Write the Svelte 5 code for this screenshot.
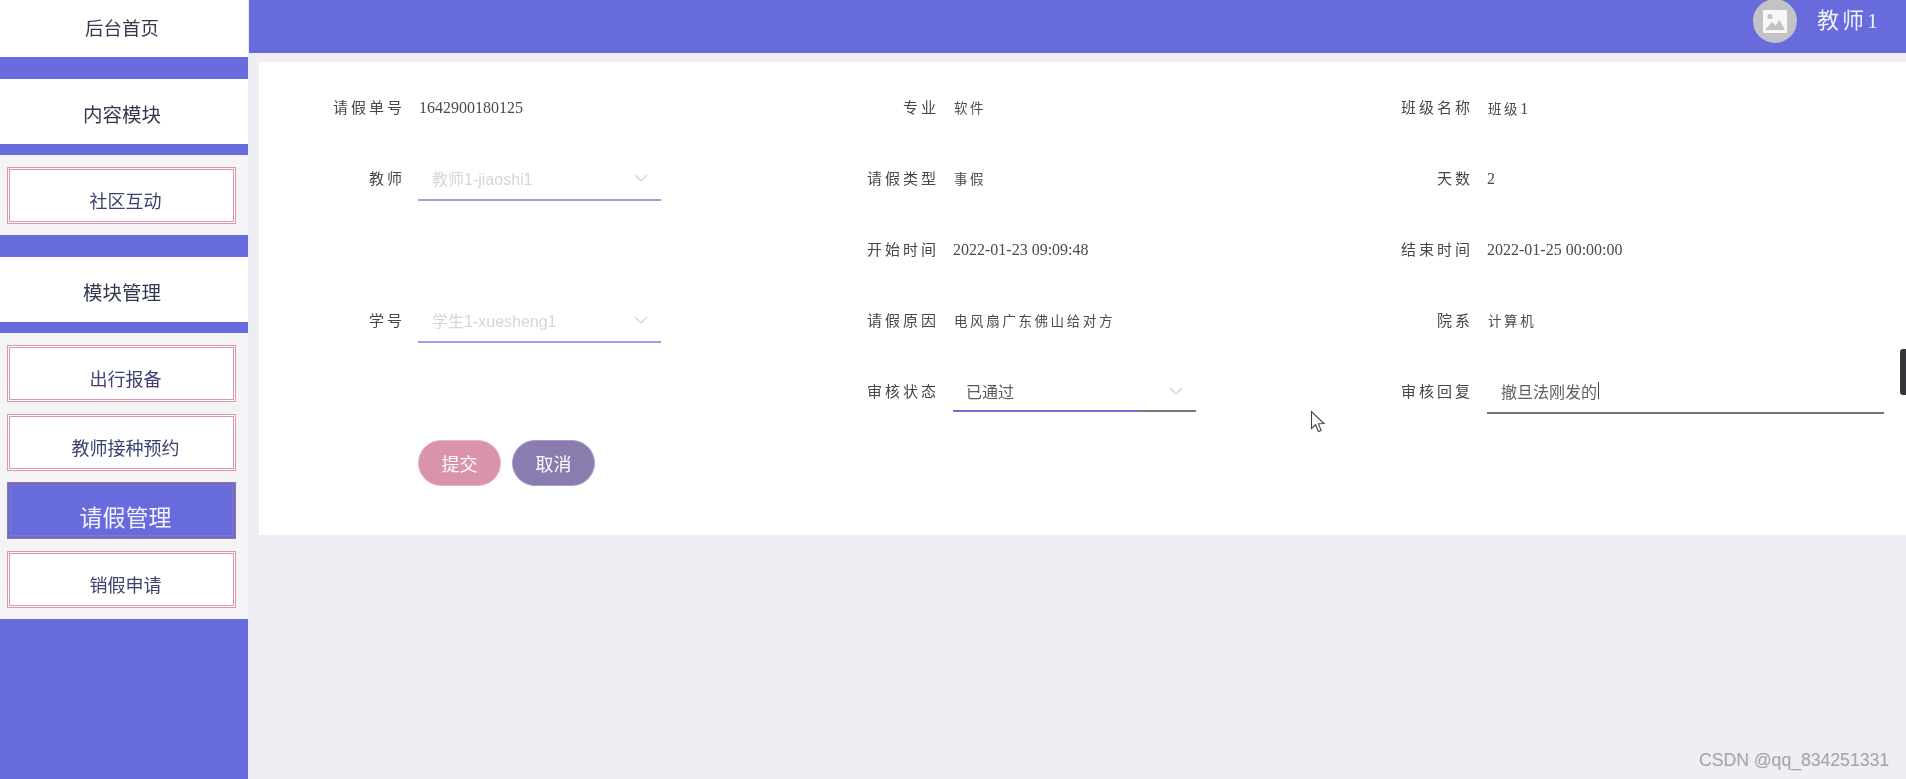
<script>
  const panelA = [{ t: '社区互动' }];
  const panelB = [
    { t: '出行报备' },
    { t: '教师接种预约' },
    { t: '请假管理', active: true },
    { t: '销假申请' }
  ];
</script>

<div class="page">
  <aside class="side">
    <div class="head first">后台首页</div>
    <div class="head second">内容模块</div>
    <div class="panel one">
      {#each panelA as it}
        <div class="item">{it.t}</div>
      {/each}
    </div>
    <div class="head third">模块管理</div>
    <div class="panel two">
      {#each panelB as it}
        <div class="item" class:active={it.active}>{it.t}</div>
      {/each}
    </div>
  </aside>

  <main class="main">
    <header class="top">
      <div class="avatar">
        <svg width="24" height="23" viewBox="0 0 24 23">
          <rect width="24" height="23" rx="1" fill="#f7f7f8" />
          <circle cx="7" cy="6.5" r="2.6" fill="#c3c3c6" />
          <path d="M2 20 L9 12 L12.5 15.5 L16.5 10 L22 20 Z" fill="#c3c3c6" />
        </svg>
      </div>
      <div class="user">教师<span class="num">1</span></div>
    </header>

    <section class="card">
      <div class="grid">
        <div class="cell"><span class="lab">请假单号</span><span class="val">1642900180125</span></div>
        <div class="cell"><span class="lab">专业</span><span class="val cjk">软件</span></div>
        <div class="cell"><span class="lab">班级名称</span><span class="val"><span class="cjk">班级</span>1</span></div>

        <div class="cell">
          <span class="lab">教师</span>
          <div class="select light"><span class="ph">教师1-jiaoshi1</span>
            <svg class="chev" width="14" height="8" viewBox="0 0 14 8"><path d="M1 1 L7 7 L13 1" /></svg>
          </div>
        </div>
        <div class="cell"><span class="lab">请假类型</span><span class="val cjk">事假</span></div>
        <div class="cell"><span class="lab">天数</span><span class="val">2</span></div>

        <div class="cell"></div>
        <div class="cell"><span class="lab">开始时间</span><span class="val">2022-01-23 09:09:48</span></div>
        <div class="cell"><span class="lab">结束时间</span><span class="val">2022-01-25 00:00:00</span></div>

        <div class="cell">
          <span class="lab">学号</span>
          <div class="select light"><span class="ph">学生1-xuesheng1</span>
            <svg class="chev" width="14" height="8" viewBox="0 0 14 8"><path d="M1 1 L7 7 L13 1" /></svg>
          </div>
        </div>
        <div class="cell"><span class="lab">请假原因</span><span class="val cjk">电风扇广东佛山给对方</span></div>
        <div class="cell"><span class="lab">院系</span><span class="val cjk">计算机</span></div>

        <div class="cell"></div>
        <div class="cell">
          <span class="lab">审核状态</span>
          <div class="select focus"><span class="sel">已通过</span>
            <svg class="chev" width="14" height="8" viewBox="0 0 14 8"><path d="M1 1 L7 7 L13 1" /></svg>
          </div>
        </div>
        <div class="cell">
          <span class="lab">审核回复</span>
          <div class="input"><span class="typed">撤旦法刚发的</span><span class="caret"></span></div>
        </div>
      </div>

      <div class="actions">
        <button class="btn ok">提交</button>
        <button class="btn no">取消</button>
      </div>
    </section>
  </main>

  <div class="tab"></div>
  <svg class="cursor" width="16" height="24" viewBox="0 0 16 24">
    <path d="M1.5 1.5 V18.5 L5.6 14.8 L8.4 21.6 L11.2 20.4 L8.4 13.8 L14 13.6 Z" fill="#fff" stroke="#444" stroke-width="1.1" />
  </svg>
  <div class="mark">CSDN @qq_834251331</div>
</div>

<style>
  :global(body) {
    margin: 0;
    background: #eeeef4;
  }
  .page {
    position: relative;
    display: flex;
    width: 1906px;
    height: 779px;
    overflow: hidden;
    font-family: "Noto Sans CJK SC", sans-serif;
  }
  .side {
    width: 248px;
    flex: none;
    background: #676bdb;
    display: flex;
    flex-direction: column;
    filter: blur(0.35px);
  }
  .head {
    background: #fff;
    color: #33384f;
    font-size: 19px;
    display: flex;
    align-items: center;
    justify-content: center;
    padding-right: 4px;
    box-sizing: border-box;
  }
  .first {
    height: 57px;
    font-size: 18.5px;
    padding-bottom: 4px;
  }
  .second {
    height: 65px;
    margin-top: 22px;
    padding-top: 3px;
    font-size: 19.5px;
  }
  .third {
    height: 65px;
    margin-top: 22px;
    padding-top: 3px;
    font-size: 19.5px;
  }
  .panel {
    background: #f4f4f6;
    margin-top: 11px;
    padding: 12px 12px 11px 7px;
    display: flex;
    flex-direction: column;
    gap: 11.5px;
  }
  .item {
    height: 57px;
    box-sizing: border-box;
    background: #fff;
    border: 3px double #dc96ae;
    color: #3b4270;
    font-size: 18px;
    display: flex;
    justify-content: center;
    align-items: center;
    padding: 9px 0 0 8px;
  }
  .item.active {
    background: #676bdb;
    border: 4px double #8f76ad;
    color: #f2f2fb;
    font-size: 23px;
    padding-top: 11px;
  }
  .main {
    flex: 1;
    margin-left: 1px;
    min-width: 0;
    display: flex;
    flex-direction: column;
    filter: blur(0.35px);
  }
  .top {
    height: 53px;
    flex: none;
    background: #676bdb;
    display: flex;
    justify-content: flex-end;
    padding-right: 28px;
    gap: 20px;
  }
  .avatar {
    width: 44px;
    height: 44px;
    margin-top: -1px;
    border-radius: 50%;
    background: #c3c3c6;
    display: flex;
    align-items: center;
    justify-content: center;
  }
  .user {
    color: #eef0fa;
    font-size: 22px;
    letter-spacing: 3px;
    line-height: 41px;
    font-family: "Liberation Serif", "Noto Sans CJK SC", serif;
  }
  .num {
    letter-spacing: 0;
  }
  .card {
    margin: 9px 0 0 10px;
    height: 473px;
    box-sizing: border-box;
    background: #fff;
    padding-top: 10px;
  }
  .grid {
    display: grid;
    grid-template-columns: 534px 534px 1fr;
    grid-auto-rows: 71px;
  }
  .cell {
    display: flex;
    align-items: center;
    gap: 14px;
    font-family: "Liberation Serif", "Noto Sans CJK SC", serif;
  }
  .lab {
    width: 146px;
    flex: none;
    text-align: right;
    color: #45454d;
    font-size: 15px;
    letter-spacing: 3px;
    padding-bottom: 2px;
    font-family: "Noto Sans CJK SC", sans-serif;
  }
  .val {
    color: #4a4a50;
    font-size: 16px;
  }
  .cjk {
    font-size: 13.5px;
    letter-spacing: 2.6px;
    padding-left: 1px;
    padding-bottom: 2px;
    font-family: "Noto Sans CJK SC", sans-serif;
  }
  .select {
    position: relative;
    width: 243px;
    height: 44px;
    margin-left: -1px;
    box-sizing: border-box;
    display: flex;
    align-items: center;
    padding-left: 14px;
    font-family: "Liberation Sans", "Noto Sans CJK SC", sans-serif;
    font-size: 16px;
    border-bottom: 2px solid #a69cdb;
  }
  .focus {
    margin-left: 0;
    padding-left: 13px;
    border-bottom-color: transparent;
    background: linear-gradient(90deg, #7570cf 77%, #777 77%) bottom / 100% 2px no-repeat;
  }
  .ph {
    color: #d6d6da;
  }
  .sel {
    color: #5a5a60;
    font-size: 16px;
  }
  .chev {
    position: absolute;
    right: 13px;
    top: 17px;
    fill: none;
    stroke: #d2d2d6;
    stroke-width: 1.2;
  }
  .input {
    width: 397px;
    height: 44px;
    box-sizing: border-box;
    display: flex;
    align-items: center;
    padding-left: 14px;
    border-bottom: 2px solid #747478;
    font-family: "Liberation Sans", "Noto Sans CJK SC", sans-serif;
    font-size: 16px;
    color: #606065;
  }
  .caret {
    width: 1px;
    height: 17px;
    background: #444;
    margin-left: 1px;
  }
  .actions {
    margin: 13px 0 0 159px;
    display: flex;
    gap: 11px;
  }
  .btn {
    width: 83px;
    height: 46px;
    border-radius: 23px;
    color: #fbfbfd;
    font-size: 18px;
    font-family: "Noto Sans CJK SC", sans-serif;
    padding: 0;
  }
  .ok {
    background: #d993ad;
    border: 1px solid #e6b4c6;
  }
  .no {
    background: #8b7cb0;
    border: 1px solid #a99cc8;
  }
  .tab {
    position: absolute;
    right: 0;
    top: 349px;
    width: 6px;
    height: 46px;
    background: #36363a;
    border-radius: 3px 0 0 3px;
  }
  .cursor {
    position: absolute;
    left: 1310px;
    top: 410px;
  }
  .mark {
    position: absolute;
    left: 1699px;
    top: 750px;
    font-family: "Liberation Sans", sans-serif;
    font-size: 17.6px;
    line-height: 20px;
    color: #a4a4a8;
    white-space: nowrap;
  }
</style>
